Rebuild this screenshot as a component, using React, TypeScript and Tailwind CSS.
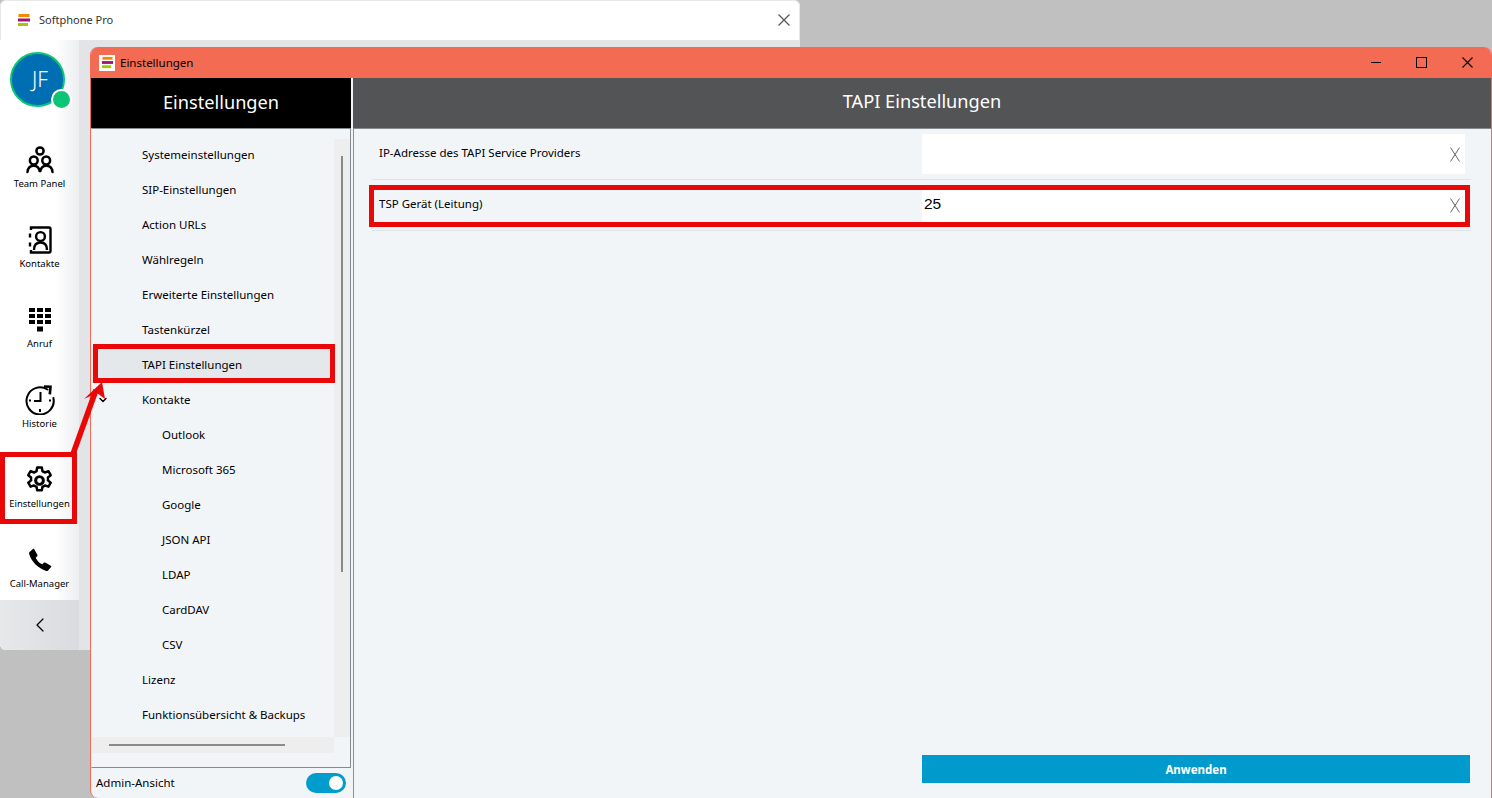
import { ChevronLeft, ChevronDown } from "lucide-react";

const FONT = "font-['Noto_Sans','Open_Sans',sans-serif]";

const MENU = [
  { label: "Systemeinstellungen" },
  { label: "SIP-Einstellungen" },
  { label: "Action URLs" },
  { label: "Wählregeln" },
  { label: "Erweiterte Einstellungen" },
  { label: "Tastenkürzel" },
  { label: "TAPI Einstellungen", active: true },
  { label: "Kontakte", parent: true },
  { label: "Outlook", child: true },
  { label: "Microsoft 365", child: true },
  { label: "Google", child: true },
  { label: "JSON API", child: true },
  { label: "LDAP", child: true },
  { label: "CardDAV", child: true },
  { label: "CSV", child: true },
  { label: "Lizenz" },
  { label: "Funktionsübersicht & Backups" },
];

function Logo({ size = 14 }: { size?: number }) {
  return (
    <svg width={size} height={size} viewBox="0 0 14 14">
      <rect x="1.5" y="1" width="11" height="3" fill="#f28a00" />
      <rect x="1" y="5.5" width="12" height="3" fill="#a3126f" />
      <rect x="1" y="10" width="10" height="3" fill="#a4c800" />
    </svg>
  );
}

function ThinX({ w, h, color, sw = 1 }: { w: number; h: number; color: string; sw?: number }) {
  return (
    <svg width={w} height={h} viewBox={`0 0 ${w} ${h}`} fill="none" stroke={color} strokeWidth={sw}>
      <path d={`M0.5 0.5 ${w - 0.5} ${h - 0.5}M${w - 0.5} 0.5 0.5 ${h - 0.5}`} />
    </svg>
  );
}

function TeamIcon() {
  return (
    <svg width="28" height="28" viewBox="0 0 28 28" fill="none" stroke="#000" strokeWidth="2.5" strokeLinecap="round">
      <circle cx="14" cy="5" r="3.6" />
      <circle cx="7.8" cy="14.5" r="3.9" />
      <circle cx="20.2" cy="14.5" r="3.9" />
      <path d="M1.500 26c.4-4 2.800-6.200 6.300-6.200s5.400 2.200 6.200 6.200c.8-4 2.700-6.200 6.200-6.200s5.900 2.200 6.300 6.200" />
    </svg>
  );
}

function ContactIcon() {
  return (
    <svg width="24" height="30" viewBox="0 0 24 30" fill="none" stroke="#000" strokeWidth="2.400">
      <path d="M3 5V2.500h18a1.500 1.500 0 0 1 1.500 1.500v22a1.500 1.500 0 0 1-1.500 1.500H3V25" />
      <path d="M2 8.500v4M2 17.500v4" />
      <circle cx="12.500" cy="11.500" r="4.400" />
      <path d="M6 25c0-5 2.500-7.500 6.500-7.500S19 20 19 25" />
    </svg>
  );
}

function KeypadIcon() {
  return (
    <svg width="24" height="26" viewBox="0 0 24 26" fill="#000">
      {[1, 7, 13].map((y) =>
        [1, 9, 17].map((x) => <rect key={`${x}-${y}`} x={x} y={y} width="6" height="4" />)
      )}
      <rect x="9" y="19.500" width="6" height="5" />
    </svg>
  );
}

function HistoryIcon() {
  return (
    <svg width="30" height="30" viewBox="0 0 30 30" fill="none" stroke="#000" strokeWidth="2">
      <path d="M22.500 4.500A13.600 13.600 0 1 0 28.400 13" strokeLinecap="round" />
      <path d="M19 1.500l6.500.3-.7 7.500" strokeWidth="2.600" />
      <path d="M15.500 7v9H9" strokeWidth="2" />
      <path d="M4 15.500h2M24 15.500h2M15 24v3" />
    </svg>
  );
}

function GearIcon() {
  return (
    <svg width="31" height="31" viewBox="0 0 24 24" fill="none" stroke="#000" strokeWidth="1.900" strokeLinejoin="round">
      <path d="M10.200 2h3.600l.5 2.800c.7.2 1.300.6 1.900 1l2.700-1 1.800 3.100-2.200 1.800a7 7 0 0 1 0 2.200l2.200 1.800-1.800 3.100-2.700-1c-.6.4-1.200.8-1.900 1l-.5 2.800h-3.600l-.5-2.800c-.7-.2-1.300-.6-1.900-1l-2.700 1-1.800-3.100 2.200-1.800a7 7 0 0 1 0-2.200L3.300 7.900l1.800-3.100 2.700 1c.6-.4 1.200-.8 1.900-1z" />
      <circle cx="12" cy="12" r="3" strokeWidth="2.300" />
    </svg>
  );
}

function PhoneIcon() {
  return (
    <svg width="24" height="24" viewBox="0 0 24 24" fill="#000">
      <path d="M6.200 1.200 9.400 6.800c.3.500.2 1-.2 1.400L7.700 9.700c1.300 2.900 3.700 5.300 6.600 6.600l1.500-1.500c.4-.4.900-.5 1.400-.2l5.600 3.200c.5.300.6.900.3 1.300l-3 3.300c-.5.500-1.200.7-1.900.5C10.400 20.700 3.300 13.600 1.100 5.800c-.2-.7 0-1.400.5-1.900l3.300-3c.4-.3 1-.2 1.300.3z" />
    </svg>
  );
}

function NavItem({ icon, label }: { icon: React.ReactNode; label: string }) {
  return (
    <div className="flex h-20 flex-col items-center justify-end pb-[10px]">
      <div className="flex h-[32px] items-center justify-center">{icon}</div>
      <span className="mt-[1px] text-[9.5px] leading-[13px] text-black">{label}</span>
    </div>
  );
}

function MainWindow() {
  return (
    <div className="absolute left-0 top-0 flex h-[650px] w-[800px] flex-col overflow-hidden rounded-md bg-white shadow-[inset_0_0_0_1px_#e6e8ec]">
      <div className="flex h-10 shrink-0 items-center pl-[17px] pr-[10px]">
        <Logo />
        <span className="ml-2 text-[11px] text-[#333]">Softphone Pro</span>
        <div className="ml-auto">
          <ThinX w={12} h={12} color="#555" sw={1.2} />
        </div>
      </div>
      <div className="flex min-h-0 flex-1">
        <div className="flex w-[79px] shrink-0 flex-col bg-gradient-to-r from-white from-70% to-[#eceef0]">
          <div className="flex h-20 items-start pl-[10px] pt-[12px]">
            <div className="relative flex h-[55px] w-[55px] items-center justify-center rounded-full border-[2px] border-[#0cc476] bg-[#006eb3] pl-[5px] text-[21px] font-light text-white">
              JF
              <span className="absolute -bottom-[5px] -right-[9px] h-[21px] w-[21px] rounded-full border-[2px] border-white bg-[#0cc476]" />
            </div>
          </div>
          <NavItem icon={<TeamIcon />} label="Team Panel" />
          <NavItem icon={<ContactIcon />} label="Kontakte" />
          <NavItem icon={<KeypadIcon />} label="Anruf" />
          <NavItem icon={<HistoryIcon />} label="Historie" />
          <NavItem icon={<GearIcon />} label="Einstellungen" />
          <NavItem icon={<PhoneIcon />} label="Call-Manager" />
          <div className="flex flex-1 items-center justify-center bg-gradient-to-r from-[#e6e8ea] to-[#d9dbde]">
            <ChevronLeft className="h-6 w-6 text-black" strokeWidth={1.3} />
          </div>
        </div>
        <div className="flex-1 bg-[#e2e4e7]" />
      </div>
      {/* red mark around the settings nav item */}
      <div className="absolute left-0 top-[452px] h-[72px] w-[77px] border-[5px] border-[#e90707]" />
    </div>
  );
}

function SideMenu() {
  return (
    <div className="flex w-[262px] shrink-0 flex-col">
      <div className="flex h-[50px] w-[260px] shrink-0 items-center justify-center bg-black text-[18.200px] text-white">
        Einstellungen
      </div>
      <div className="relative h-[640px] w-[260px] shrink-0 border-y border-r border-l border-[#858a90] border-l-[#f0f3f6]">
        <div className="flex h-[608px]">
          <div className="w-[242px] shrink-0 pt-[8.500px]">
            {MENU.map((item) => (
              <div
                key={item.label}
                className={`relative flex h-[35px] items-center text-[11.5px] text-black ${item.child ? "pl-[70px]" : "pl-[50px]"} ${item.active ? "bg-[#e5e8eb]" : ""}`}
              >
                {item.parent && <ChevronDown className="absolute left-[5px] top-[11px] h-[12px] w-[12px]" strokeWidth={2.8} />}
                {item.label}
                {item.active && <div className="absolute -top-[3.500px] left-[1px] h-[39px] w-[242px] border-[5px] border-[#e90707]" />}
              </div>
            ))}
          </div>
          <div className="mt-[10px] flex h-[598px] w-[16px] justify-center bg-[#eeeeee] pt-[17px]">
            <div className="h-[416px] w-[2px] bg-[#8a8a8a]" />
          </div>
        </div>
        <div className="flex h-[16px] w-[242px] items-center bg-[#eeeeee] pl-[17px]">
          <div className="h-[2px] w-[176px] bg-[#8a8a8a]" />
        </div>
      </div>
      <div className="flex flex-1 items-center justify-between pl-[5px] pr-[7px]">
        <span className="text-[11.5px] text-black">Admin-Ansicht</span>
        <div className="flex h-[20px] w-[40px] items-center justify-end rounded-full bg-[#009ccd] pr-[3px]">
          <div className="h-[14px] w-[14px] rounded-full bg-white" />
        </div>
      </div>
    </div>
  );
}

function FieldRow({ label, value, marked }: { label: string; value?: string; marked?: boolean }) {
  return (
    <div className={`relative flex h-[46px] border-b border-[#dfe3e6] pr-[5px] ${marked ? "mt-[5px] pt-[5px]" : ""}`}>
      <div className="flex h-[40px] w-[550px] shrink-0 items-center pl-[7px] text-[11.5px] text-black">
        <span className={marked ? "-mt-[12px]" : "-mt-[2px]"}>{label}</span>
      </div>
      <div className={`relative flex w-[543px] items-center bg-white pl-[2px] font-['Liberation_Sans',sans-serif] text-[15.500px] text-black ${marked ? "h-[32px] pb-[5px]" : "h-[40px]"}`}>
        {value}
        <div className={`absolute right-[5px] ${marked ? "top-[8px]" : "top-[13px]"}`}>
          <ThinX w={10} h={15} color="#666" />
        </div>
      </div>
      {marked && <div className="absolute -left-[3px] top-0 h-[42px] w-[1101px] border-[5px] border-[#e90707]" />}
    </div>
  );
}

function SettingsWindow() {
  return (
    <div className="absolute left-[90px] top-[47px] flex h-[751px] w-[1402px] flex-col overflow-hidden rounded-t-lg rounded-bl-lg border-x border-[#f26b52] bg-[#f2f5f8]">
      <div className="flex h-[31px] shrink-0 items-center bg-[#f26b52] pl-[8px] pr-[18px]">
        <div className="flex h-[16px] w-[16px] items-center justify-center bg-white">
          <Logo size={13} />
        </div>
        <span className="ml-[5px] text-[11.5px] text-black">Einstellungen</span>
        <div className="ml-auto flex items-center gap-[35px]">
          <div className="h-px w-[10px] bg-black" />
          <div className="h-[11px] w-[11px] border border-black" />
          <ThinX w={11} h={11} color="#000" sw={1.1} />
        </div>
      </div>
      <div className="flex min-h-0 flex-1">
        <SideMenu />
        <div className="flex min-w-0 flex-1 flex-col">
          <div className="flex h-[51px] shrink-0 items-center justify-center border-b border-[#858a90] bg-[#535456] pb-[2px] text-[18.200px] text-white">
            TAPI Einstellungen
          </div>
          <div className="flex flex-1 flex-col border-l border-[#8a8f95] pl-[18px] pr-[20px] pt-[5px]">
            <FieldRow label="IP-Adresse des TAPI Service Providers" />
            <FieldRow label="TSP Gerät (Leitung)" value="25" marked />
            <button className="mb-[15px] ml-[550px] mt-auto flex h-[28px] w-[548px] shrink-0 items-center justify-center bg-[#009bcc] pt-[1px] text-[11.5px] font-bold text-white">
              Anwenden
            </button>
          </div>
        </div>
      </div>
    </div>
  );
}

export default function App() {
  return (
    <div className={`relative h-[798px] w-[1492px] overflow-hidden bg-[#c0c0c0] ${FONT}`}>
      <MainWindow />
      <SettingsWindow />
      {/* red arrow between the two marks */}
      <svg className="absolute left-[60px] top-[370px]" width="60" height="90" viewBox="0 0 60 90" fill="none">
        <path d="M13 84 36 20" stroke="#e90707" strokeWidth="5.500" />
        <path d="M24 29 42 12l3 17-8-6z" fill="#e90707" />
      </svg>
    </div>
  );
}
